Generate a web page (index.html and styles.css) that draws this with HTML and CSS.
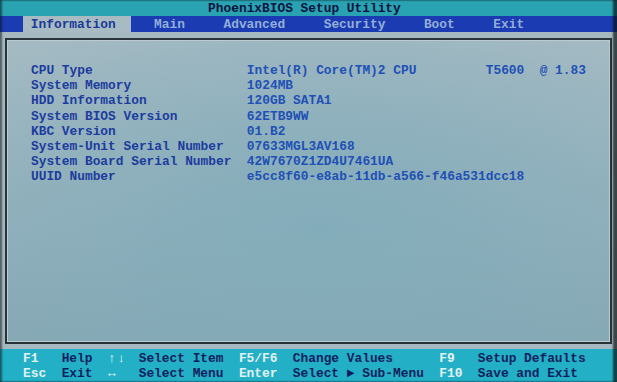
FILE: index.html
```html
<!DOCTYPE html>
<html>
<head>
<meta charset="utf-8">
<link rel="stylesheet" href="styles.css">
</head>
<body>
<div class="screen">
  <div class="title">PhoenixBIOS Setup Utility</div>
  <div class="menu">
    <span class="tab active">Information</span>
    <span class="tab first">Main</span>
    <span class="tab">Advanced</span>
    <span class="tab">Security</span>
    <span class="tab">Boot</span>
    <span class="tab">Exit</span>
  </div>
  <div class="main">
    <div class="frame">
      <div class="info">
        <span class="lbl">CPU Type</span><span class="val">Intel(R) Core(TM)2 CPU         T5600  @ 1.83</span>
        <span class="lbl">System Memory</span><span class="val">1024MB</span>
        <span class="lbl">HDD Information</span><span class="val">120GB SATA1</span>
        <span class="lbl">System BIOS Version</span><span class="val">62ETB9WW</span>
        <span class="lbl">KBC Version</span><span class="val">01.B2</span>
        <span class="lbl">System-Unit Serial Number</span><span class="val">07633MGL3AV168</span>
        <span class="lbl">System Board Serial Number</span><span class="val">42W7670Z1ZD4U7461UA</span>
        <span class="lbl">UUID Number</span><span class="val">e5cc8f60-e8ab-11db-a566-f46a531dcc18</span>
      </div>
    </div>
  </div>
  <div class="footer">
    <span class="key">F1</span><span class="desc">Help</span><span class="key arrow">↑↓</span><span class="desc">Select Item</span><span class="key">F5/F6</span><span class="desc">Change Values</span><span class="key">F9</span><span class="desc">Setup Defaults</span>
    <span class="key">Esc</span><span class="desc">Exit</span><span class="key arrow">↔</span><span class="desc">Select Menu</span><span class="key">Enter</span><span class="desc">Select ► Sub-Menu</span><span class="key">F10</span><span class="desc">Save and Exit</span>
  </div>
</div>
</body>
</html>
```

FILE: styles.css
```css
html, body {
  margin: 0;
  padding: 0;
  background: #12201f;
}

.screen {
  width: 617px;
  height: 382px;
  overflow: hidden;
  display: flex;
  flex-direction: column;
  font-family: "Liberation Mono", "DejaVu Sans Mono", monospace;
  font-size: 12.85px;
  font-weight: bold;
  position: relative;
}

.screen::after {
  content: "";
  position: absolute;
  inset: 0;
  pointer-events: none;
  box-shadow: inset 2px 0 2px rgba(10, 20, 20, 0.55), inset -4px 0 2px rgba(10, 20, 20, 0.7);
}

.title {
  height: 15px;
  line-height: 15px;
  padding-top: 1px;
  background: #29a2b2;
  color: #0a1440;
  padding-left: 27ch;
  white-space: pre;
}

.menu {
  height: 15px;
  line-height: 15px;
  padding-top: 1px;
  background: #1b3bb2;
  color: #93aed8;
  display: flex;
  white-space: pre;
}

.tab {
  margin-left: 5ch;
}

.tab.first {
  margin-left: 3ch;
}

.tab.active {
  margin-left: 3ch;
  width: 13ch;
  padding-left: 1ch;
  margin-top: -1px;
  padding-top: 1px;
  background: #a8bac2;
  color: #1c3a98;
}

.main {
  flex: 1;
  display: flex;
  background: #a7b9c0;
  padding: 6px 5px 5px 5px;
}

.frame {
  flex: 1;
  border: 2px solid #26343a;
  box-shadow: inset 0 0 0 1px #bccbd0;
  background:
    radial-gradient(ellipse 70% 80% at 52% 62%, rgba(130, 172, 186, 0.9) 0%, rgba(130, 172, 186, 0) 100%),
    linear-gradient(to bottom, #a4bac3 0%, #98b4be 40%, #86a8b4 100%);
  padding: 23px 0 0 24px;
}

.info {
  display: grid;
  grid-template-columns: 28ch auto;
  line-height: 15.2px;
  white-space: pre;
}

.lbl {
  color: #1d3c9e;
}

.val {
  color: #2150b6;
}

.footer {
  height: 31px;
  background: #23b0c6;
  display: grid;
  grid-template-columns: 5ch 6ch 4ch 13ch 7ch 19ch 5ch auto;
  grid-auto-rows: 15.3px;
  line-height: 15.3px;
  padding: 2px 0 0 3ch;
  white-space: pre;
}

.key {
  color: #e2f2f4;
}

.desc {
  color: #0e1f5e;
}

.arrow {
  letter-spacing: 2px;
}
```
